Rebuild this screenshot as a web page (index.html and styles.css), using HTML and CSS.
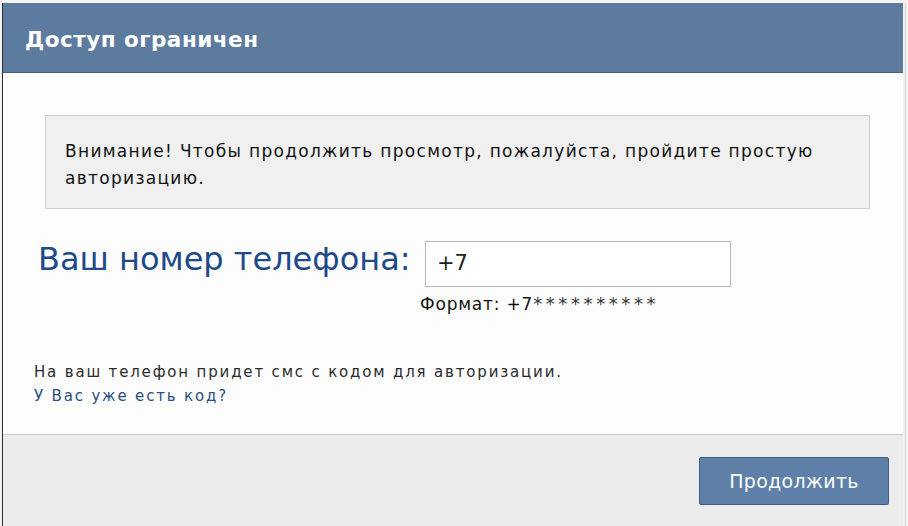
FILE: index.html
```html
<!DOCTYPE html>
<html lang="ru">
<head>
<meta charset="utf-8">
<title>Доступ ограничен</title>
<link rel="stylesheet" href="styles.css">
</head>
<body>
<div class="page">
  <div class="dialog">
    <div class="header"><span class="title">Доступ ограничен</span></div>
    <div class="content">
      <div class="notice">Внимание! Чтобы продолжить просмотр, пожалуйста, пройдите простую авторизацию.</div>
      <div class="phone-row">
        <span class="phone-label">Ваш номер телефона:</span>
        <div class="phone-field">
          <div class="input">+7</div>
          <div class="format">Формат: +7<span class="stars">**********</span></div>
        </div>
      </div>
      <div class="info">
        <div>На ваш телефон придет смс с кодом для авторизации.</div>
        <a class="link" href="#">У Вас уже есть код?</a>
      </div>
    </div>
    <div class="footer">
      <div class="button">Продолжить</div>
    </div>
  </div>
  <div class="side"></div>
</div>
</body>
</html>
```

FILE: styles.css
```css
html, body {
  margin: 0;
  padding: 0;
}
body {
  width: 908px;
  height: 526px;
  overflow: hidden;
  background: #f3f3f3;
  font-family: "DejaVu Sans", Tahoma, sans-serif;
}
.page {
  display: flex;
  height: 526px;
  padding-top: 3px;
  padding-left: 2px;
  box-sizing: border-box;
}
.dialog {
  width: 900px;
  display: flex;
  flex-direction: column;
  border-left: 1px solid #2e2e2e;
  background: #fff;
}
.side {
  flex: 1;
  border-left: 1px solid #d6d6d6;
  margin-left: 2px;
}
.header {
  height: 69px;
  background: #5d7b9f;
  border-bottom: 1px solid #47627f;
  display: flex;
  align-items: center;
  padding-left: 22px;
}
.title {
  color: #fff;
  font-weight: bold;
  font-size: 21.5px;
  letter-spacing: 0.5px;
  margin-top: 3px;
}
.content {
  height: 361px;
  background: #fdfdfd;
  padding: 42px 0 0 0;
  box-sizing: border-box;
}
.notice {
  margin-left: 42px;
  width: 825px;
  height: 94px;
  box-sizing: border-box;
  background: #f0f0f0;
  border: 1px solid #cfcfcf;
  padding: 22px 20px 0 19px;
  font-size: 17px;
  letter-spacing: 1.3px;
  line-height: 27px;
  color: #111;
}
.phone-row {
  display: flex;
  align-items: flex-start;
  margin-top: 32px;
  margin-left: 35px;
}
.phone-label {
  font-size: 32px;
  color: #1f4a8a;
  margin-top: -1px;
  width: 387px;
}
.phone-field {
  display: flex;
  flex-direction: column;
}
.input {
  width: 306px;
  height: 46px;
  box-sizing: border-box;
  border: 1px solid #b8b8b8;
  background: #fff;
  font-size: 21px;
  padding: 9px 0 0 11px;
  color: #222;
}
.format {
  font-size: 17px;
  letter-spacing: 0.8px;
  color: #111;
  margin-left: -5px;
  margin-top: 6px;
  white-space: nowrap;
}
.stars {
  color: #333;
  font-size: 18px;
  letter-spacing: 3.6px;
}
.info {
  margin-top: 46px;
  margin-left: 31px;
  font-size: 15px;
  letter-spacing: 1.83px;
  line-height: 24px;
  color: #2b2b2b;
}
.link {
  color: #2b4f7e;
  text-decoration: none;
}
.footer {
  flex: 1;
  background: #ececec;
  border-top: 1px solid #c9c9c9;
  display: flex;
  justify-content: flex-end;
  align-items: flex-start;
  padding: 22px 14px 0 0;
}
.button {
  width: 190px;
  height: 48px;
  box-sizing: border-box;
  background: #5d7fa8;
  border: 1px solid #3f5f86;
  border-radius: 2px;
  color: #fff;
  font-size: 19px;
  letter-spacing: 0.3px;
  display: flex;
  align-items: center;
  justify-content: center;
}
```
